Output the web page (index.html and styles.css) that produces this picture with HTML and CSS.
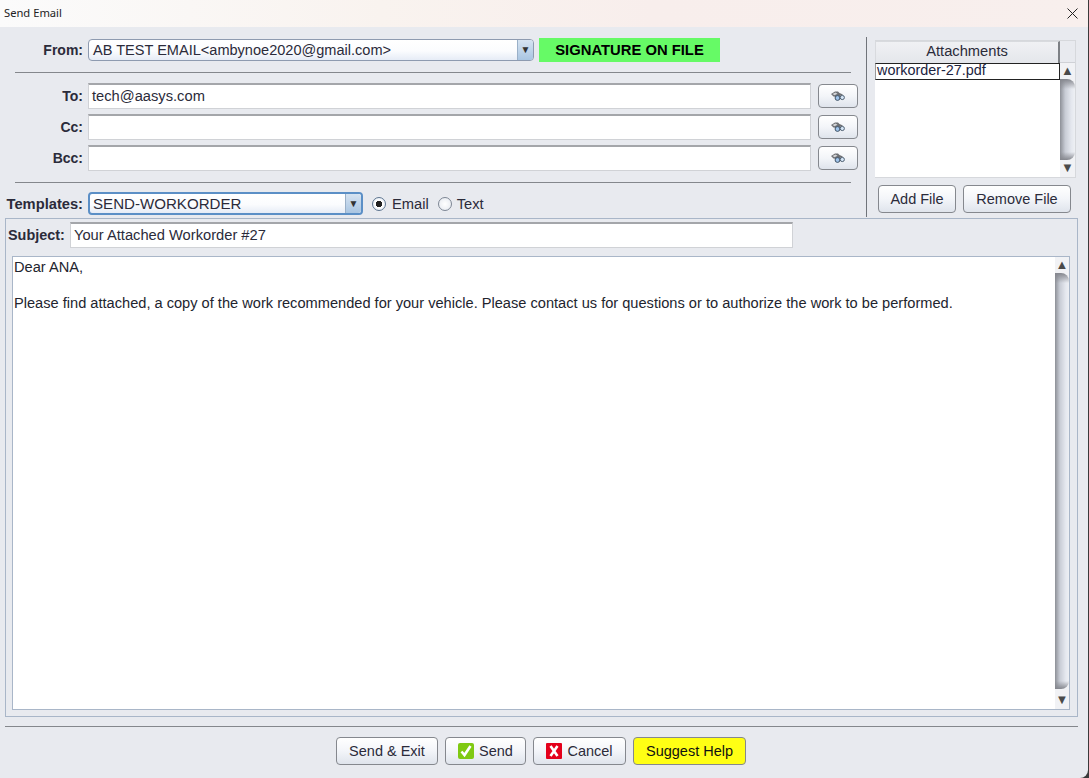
FILE: index.html
```html
<!DOCTYPE html>
<html lang="en">
<head>
<meta charset="utf-8">
<title>Send Email</title>
<link rel="stylesheet" href="styles.css">
</head>
<body>
<svg class="defs" width="0" height="0" aria-hidden="true">
  <symbol id="binoc" viewBox="0 0 14 10">
    <path d="M0 3 4 .5h3L8.500 2 12 3.500 9 5 6 6 2.500 5.500z" fill="#6d6f73"/>
    <path d="M1.500 3 4.500 1.500 6.500 2.800 3.500 4.200z" fill="#d4d5d8"/>
    <circle cx="6.500" cy="7" r="2.400" fill="#9fc3ea" stroke="#3f5266" stroke-width="1"/>
    <circle cx="11.300" cy="6.500" r="2.100" fill="#d5e5f6" stroke="#4f6072" stroke-width="1"/>
  </symbol>
</svg>
<div class="window">
  <header class="titlebar">
    <span class="title">Send Email</span>
    <svg class="close" width="11" height="11" viewBox="0 0 11 11"><path d="M.5.5l10 10M10.500.5l-10 10" stroke="#222" stroke-width="1" fill="none"/></svg>
  </header>
  <div class="top">
    <div class="fields">
      <div class="row row-from">
        <label class="lbl">From:</label>
        <div class="combo combo-from"><span class="combo-text">AB TEST EMAIL&lt;ambynoe2020@gmail.com&gt;</span><span class="arrow">▼</span></div>
        <div class="sig">SIGNATURE ON FILE</div>
      </div>
      <div class="sep sep-a"></div>
      <div class="row row-addr">
        <label class="lbl">To:</label>
        <div class="input addr">tech@aasys.com</div>
        <button class="btn look"><svg width="14" height="10"><use href="#binoc"/></svg></button>
      </div>
      <div class="row row-addr">
        <label class="lbl">Cc:</label>
        <div class="input addr"></div>
        <button class="btn look"><svg width="14" height="10"><use href="#binoc"/></svg></button>
      </div>
      <div class="row row-addr">
        <label class="lbl">Bcc:</label>
        <div class="input addr"></div>
        <button class="btn look"><svg width="14" height="10"><use href="#binoc"/></svg></button>
      </div>
      <div class="sep sep-b"></div>
      <div class="row row-tpl">
        <label class="lbl lbl-wide">Templates:</label>
        <div class="combo combo-tpl"><span class="combo-text">SEND-WORKORDER</span><span class="arrow">▼</span></div>
        <span class="radio on"></span><span class="radio-text">Email</span>
        <span class="radio off"></span><span class="radio-text radio-text-b">Text</span>
      </div>
    </div>
    <aside class="attach">
      <div class="attach-box">
        <div class="attach-main">
          <div class="attach-head">Attachments</div>
          <div class="attach-item">workorder-27.pdf</div>
        </div>
        <div class="scroll scroll-small">
          <div class="scroll-corner"></div>
          <div class="sb-arrow">▲</div>
          <div class="thumb"></div>
          <div class="sb-arrow sb-down">▼</div>
        </div>
      </div>
      <div class="attach-btns">
        <button class="btn act add">Add File</button>
        <button class="btn act remove">Remove File</button>
      </div>
    </aside>
  </div>
  <section class="panel">
    <div class="subject-row">
      <label class="lbl-subject">Subject:</label>
      <div class="input subject">Your Attached Workorder #27</div>
    </div>
    <div class="body-wrap">
      <div class="body-text">
        <p>Dear ANA,</p>
        <p>Please find attached, a copy of the work recommended for your vehicle. Please contact us for questions or to authorize the work to be performed.</p>
      </div>
      <div class="scroll scroll-main">
        <div class="sb-arrow">▲</div>
        <div class="thumb"></div>
        <div class="sb-arrow sb-down-main">▼</div>
      </div>
    </div>
  </section>
  <div class="sep sep-foot"></div>
  <footer class="foot">
    <button class="btn act send-exit">Send &amp; Exit</button>
    <button class="btn act send">
      <svg width="16" height="16" viewBox="0 0 16 16"><rect width="16" height="16" rx="2" fill="#7fc912"/><path d="M3.500 8.500l3 3.500 6-9" stroke="#fff" stroke-width="2.600" fill="none"/></svg>Send</button>
    <button class="btn act cancel">
      <svg width="16" height="16" viewBox="0 0 16 16"><rect width="16" height="16" rx="1" fill="#e4001b"/><path d="M4.500 3l7 10M11.500 3l-7 10" stroke="#fff" stroke-width="2.600" fill="none"/></svg>Cancel</button>
    <button class="btn act help">Suggest Help</button>
  </footer>
</div>
</body>
</html>
```
FILE: styles.css
```css
* { box-sizing: border-box; }
html, body { margin: 0; padding: 0; background: #3a3a3a; }
body { width: 1089px; height: 778px; overflow: hidden; font-family: "Liberation Sans", Arial, sans-serif; font-size: 14.7px; color: #2b2b3a; }
.defs { position: absolute; }
.window { width: 1088px; height: 778px; background: #e8eaef; border-bottom-right-radius: 8px; overflow: hidden; display: flex; flex-direction: column; }
.titlebar { height: 27px; flex: none; display: flex; align-items: center; justify-content: space-between; padding: 0 10px 3px 4px; background: linear-gradient(90deg, #fbfbfb 0%, #f9f3ef 35%, #f8eeec 60%, #f8efed 100%); }
.title { font-family: "Noto Sans", "Open Sans", sans-serif; font-size: 11.2px; color: #222; }
.close { margin-top: 3px; }

.top { height: 190px; flex: none; display: flex; }
.fields { width: 867px; flex: none; margin-top: 10px; height: 180px; border-right: 1px solid #70747a; display: flex; flex-direction: column; }
.row { display: flex; align-items: center; }
.lbl { width: 83px; flex: none; text-align: right; font-weight: bold; font-size: 14px; margin-right: 5px; white-space: nowrap; color: #2b2b3a; }
.lbl-wide { font-size: 14.7px; }
.row-from { height: 24px; margin-top: 1px; }
.row-addr { height: 26px; margin-bottom: 5px; }
.row-tpl { height: 23px; }
.sep { height: 1px; background: #84878c; flex: none; }
.sep-a { margin: 10px 15px 10px 15px; }
.sep-b { margin: 6px 15px 9px 15px; }
.sep-foot { margin: 9px 10px 0 5px; }

.combo { height: 23px; border: 1px solid #8e9bb0; border-radius: 4px; background: linear-gradient(#ffffff, #fbfcfe 55%, #e6ecf6); display: flex; align-items: center; justify-content: space-between; }
.combo-text { padding-left: 4px; padding-bottom: 1px; white-space: nowrap; font-size: 14.55px; }
.combo-from { width: 446px; height: 22px; }
.combo-tpl { width: 275px; border: 2px solid #5b8fc6; padding-left: 1px; }
.combo-tpl .combo-text { padding-left: 2px; font-size: 15.1px; }
.arrow { width: 16px; height: 100%; flex: none; font-size: 10px; line-height: 19px; text-align: center; color: #333; background: linear-gradient(#d6e3f1, #a9c5e2); border-left: 1px solid #9ab0c8; border-radius: 0 3px 3px 0; }
.sig { width: 181px; height: 24px; margin-left: 5px; background: #66fa66; color: #000; font-weight: bold; font-size: 14.8px; line-height: 24px; text-align: center; }

.input { background: #fff; border: 1px solid #d0d2d6; border-top: 2px solid #a4a6aa; display: flex; align-items: center; padding: 0 0 2px 3px; white-space: nowrap; }
.addr { width: 723px; height: 26px; color: #2b2b3a; }

.btn { font-family: "Liberation Sans", Arial, sans-serif; font-size: 14.5px; color: #2b2b3a; border: 1px solid #85888e; border-radius: 4px; background: linear-gradient(#ffffff, #f3f5f9 50%, #dfe4ec); padding: 0; display: inline-flex; align-items: center; justify-content: center; }
.look { width: 40px; height: 24px; margin-left: 7px; }

.radio { width: 14px; height: 14px; border-radius: 50%; border: 1px solid #7d8694; background: radial-gradient(circle, #fff, #e3e7ee); flex: none; }
.radio.on { margin-left: 9px; background: radial-gradient(circle, #222 0 3px, #fff 3.5px, #d9e2ee); border-color: #5d7590; }
.radio.off { margin-left: 9px; }
.radio-text { margin-left: 6px; }
.radio-text-b { margin-left: 5px; }

.attach { flex: 1; padding: 13px 0 0 8px; display: flex; flex-direction: column; }
.attach-box { width: 201px; height: 138px; display: flex; border: 1px solid #d6d8dc; border-left: 0; background: #fff; }
.attach-main { width: 185px; flex: none; }
.attach-head { height: 22px; line-height: 19px; text-align: center; background: linear-gradient(#f0f1f4, #e4e6eb); border: 1px solid #d8dade; border-right: 2px solid #7d8085; border-bottom: 0; color: #2b2b3a; }
.attach-item { height: 17px; line-height: 12px; padding-left: 1px; border: 1px solid #222; border-left-color: #999; color: #1c2340; background: #fff; font-size: 14.4px; }
.scroll { flex: none; display: flex; flex-direction: column; align-items: stretch; }
.scroll-small { width: 15px; background: #f1f2f5; }
.scroll-corner { height: 22px; background: #e8eaef; flex: none; border-bottom: 1px solid #cfd1d6; }
.scroll-main { width: 14px; background: #f1f2f5; }
.sb-arrow { height: 16px; flex: none; font-size: 13px; line-height: 16px; text-align: center; color: #4a4a4a; }
.sb-down { height: 17px; }
.sb-down-main { height: 20px; line-height: 22px; }
.thumb { flex: 1; border-radius: 0 8px 8px 0; background: linear-gradient(#85878e, rgba(133,135,142,0) 10px, rgba(133,135,142,0) calc(100% - 8px), #85878e), linear-gradient(90deg, #8d9097 0%, #c8ccd5 35%, #e4e7ee 75%, #eef0f4 100%); }

.attach-btns { display: flex; margin: 7px 0 0 3px; gap: 7px; }
.act { height: 28px; }
.add { width: 78px; }
.remove { width: 108px; }

.panel { margin: 1px 10px 0 5px; height: 499px; flex: none; border: 1px solid #a9b6c8; padding: 3px 7px 6px 2px; display: flex; flex-direction: column; }
.subject-row { display: flex; align-items: center; height: 26px; flex: none; }
.lbl-subject { width: 62px; flex: none; font-weight: bold; font-size: 14.4px; }
.subject { width: 723px; height: 26px; }
.body-wrap { margin: 8px 0 0 4px; flex: 1; border: 1px solid #a9b6c8; background: #fff; display: flex; min-height: 0; }
.body-text { flex: 1; padding: 2px 0 0 1px; color: #22242e; font-size: 14.62px; }
.body-text p { margin: 0 0 20px; line-height: 16px; }

.foot { margin-top: 10px; display: flex; justify-content: center; gap: 7px; padding-right: 6px; }
.send-exit { width: 102px; }
.send { width: 81px; gap: 5px; }
.cancel { width: 93px; gap: 5px; }
.help { width: 113px; background: #ffff14; color: #111; }
```
